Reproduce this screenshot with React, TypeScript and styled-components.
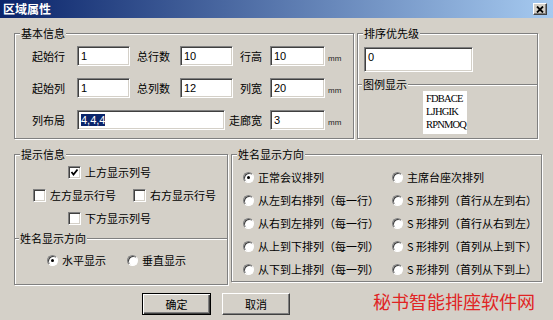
import styled, { createGlobalStyle } from 'styled-components'

const GlobalStyle = createGlobalStyle`
    html, body {
        margin: 0;
        padding: 0;
        background: #d4d0c8;
    }
    body {
        font-family: "Noto Sans CJK SC", "Liberation Sans", sans-serif;
        font-size: 11px;
        line-height: 13px;
        color: #000;
    }
`

const nameOrders = [
    ['正常会议排列', '主席台座次排列'],
    ['从左到右排列（每一行）', 'S 形排列（首行从左到右）'],
    ['从右到左排列（每一行）', 'S 形排列（首行从右到左）'],
    ['从上到下排列（每一列）', 'S 形排列（首列从上到下）'],
    ['从下到上排列（每一列）', 'S 形排列（首列从下到上）'],
]

const legendRows = ['FDBACE', 'LJHGIK', 'RPNMOQ']

const CheckBox = ({ checked, children }: { checked?: boolean; children: string }) => (
    <OptionLabel>
        <CheckSquare>
            {checked && (
                <svg width="9" height="9" viewBox="0 0 9 9">
                    <polyline points="1.5,4 3.5,6.5 7.5,1.5" fill="none" stroke="#000" strokeWidth="1.8" />
                </svg>
            )}
        </CheckSquare>
        {children}
    </OptionLabel>
)

const Radio = ({ checked, children }: { checked?: boolean; children: string }) => (
    <OptionLabel>
        <RadioDot $checked={checked} />
        {children}
    </OptionLabel>
)

export default function App() {
    return (
        <Window>
            <GlobalStyle />
            <TitleBar>
                <Title>区域属性</Title>
                <CloseButton>
                    <svg width="8" height="7" viewBox="0 0 8 7">
                        <path d="M1 0.5 L7 6.5 M7 0.5 L1 6.5" stroke="#000" strokeWidth="1.8" />
                    </svg>
                </CloseButton>
            </TitleBar>
            <Body>
                <Row>
                    <Group $w={340} $h={106}>
                        <Legend>基本信息</Legend>
                        <FieldGrid>
                            <FieldLabel>起始行</FieldLabel>
                            <Field $w={53}>1</Field>
                            <FieldLabel $pad={7}>总行数</FieldLabel>
                            <Field $w={53}>10</Field>
                            <FieldLabel $right>行高</FieldLabel>
                            <Field $w={55}>10</Field>
                            <Unit>mm</Unit>

                            <FieldLabel>起始列</FieldLabel>
                            <Field $w={53}>1</Field>
                            <FieldLabel $pad={7}>总列数</FieldLabel>
                            <Field $w={53}>12</Field>
                            <FieldLabel $right>列宽</FieldLabel>
                            <Field $w={55}>20</Field>
                            <Unit>mm</Unit>

                            <FieldLabel>列布局</FieldLabel>
                            <Field $w={148} $span={3}>
                                <Selected>4,4,4</Selected>
                            </Field>
                            <FieldLabel $right>走廊宽</FieldLabel>
                            <Field $w={55}>3</Field>
                            <Unit>mm</Unit>
                        </FieldGrid>
                    </Group>
                    <Group $w={181} $h={106} $gap={3}>
                        <Legend>排序优先级</Legend>
                        <PriorityField $w={109} $h={25}>0</PriorityField>
                        <Divider $top={6}>图例显示</Divider>
                        <LegendBox>
                            {legendRows.map((r) => (
                                <div key={r}>{r}</div>
                            ))}
                        </LegendBox>
                    </Group>
                </Row>
                <Row $top={15}>
                    <Group $w={214} $h={131}>
                        <Legend>提示信息</Legend>
                        <Checks>
                            <OptionRow $indent={53}>
                                <CheckBox checked>上方显示列号</CheckBox>
                            </OptionRow>
                            <OptionRow $indent={18} $gap={17}>
                                <CheckBox>左方显示行号</CheckBox>
                                <CheckBox>右方显示行号</CheckBox>
                            </OptionRow>
                            <OptionRow $indent={53}>
                                <CheckBox>下方显示列号</CheckBox>
                            </OptionRow>
                        </Checks>
                        <Divider $top={7}>姓名显示方向</Divider>
                        <OptionRow $indent={32} $gap={21} $top={9}>
                            <Radio checked>水平显示</Radio>
                            <Radio>垂直显示</Radio>
                        </OptionRow>
                    </Group>
                    <Group $w={311} $h={128} $gap={3}>
                        <Legend>姓名显示方向</Legend>
                        <OrderGrid>
                            {nameOrders.flat().map((t, i) => (
                                <Radio key={t} checked={i === 0}>
                                    {t}
                                </Radio>
                            ))}
                        </OrderGrid>
                    </Group>
                </Row>
                <ButtonRow>
                    <Button $default>确定</Button>
                    <Button>取消</Button>
                    <Watermark>秘书智能排座软件网</Watermark>
                </ButtonRow>
            </Body>
        </Window>
    )
}

const Window = styled.div`
    width: 553px;
    height: 320px;
    overflow: hidden;
    background: #d4d0c8;
    display: flex;
    flex-direction: column;
`

const TitleBar = styled.div`
    height: 18px;
    flex: none;
    display: flex;
    align-items: center;
    justify-content: space-between;
    padding: 0 6px 0 3px;
    background: linear-gradient(to right, #0a246a, #a6caf0);
`

const Title = styled.div`
    color: #fff;
    font-weight: bold;
    font-size: 12px;
    line-height: 18px;
`

const CloseButton = styled.div`
    width: 14px;
    height: 12px;
    box-sizing: border-box;
    display: flex;
    align-items: center;
    justify-content: center;
    background: #d4d0c8;
    border: 1px solid;
    border-color: #fff #404040 #404040 #fff;
    box-shadow: inset -1px -1px 0 #808080;
`

const Body = styled.div`
    padding: 15px 0 0 14px;
`

const Row = styled.div<{ $top?: number }>`
    display: flex;
    align-items: flex-start;
    margin-top: ${(p) => p.$top ?? 0}px;
`

const Group = styled.div<{ $w: number; $h: number; $gap?: number }>`
    position: relative;
    box-sizing: border-box;
    width: ${(p) => p.$w}px;
    height: ${(p) => p.$h}px;
    margin-left: ${(p) => p.$gap ?? 0}px;
    border: 1px solid #808080;
    box-shadow: inset 1px 1px 0 #fff, 1px 1px 0 #fff;
`

const Legend = styled.span`
    position: absolute;
    top: -7px;
    left: 5px;
    padding: 0 1px;
    line-height: 13px;
    background: #d4d0c8;
`

const FieldGrid = styled.div`
    display: grid;
    grid-template-columns: 45px 53px 50px 49px 41px 55px auto;
    grid-auto-rows: 20px;
    row-gap: 12px;
    align-items: center;
    padding: 12px 0 0 17px;
`

const FieldLabel = styled.div<{ $pad?: number; $right?: boolean }>`
    white-space: nowrap;
    padding-left: ${(p) => p.$pad ?? 0}px;
    padding-right: ${(p) => (p.$right ? 8 : 0)}px;
    text-align: ${(p) => (p.$right ? 'right' : 'left')};
`

const Field = styled.div<{ $w: number; $h?: number; $span?: number }>`
    box-sizing: border-box;
    width: ${(p) => p.$w}px;
    height: ${(p) => p.$h ?? 20}px;
    grid-column: span ${(p) => p.$span ?? 1};
    padding: 3px 0 0 3px;
    background: #fff;
    border: 1px solid;
    border-color: #808080 #fff #fff #808080;
    box-shadow: inset 1px 1px 0 #404040, inset -1px -1px 0 #d4d0c8;
    font-family: "Liberation Sans", sans-serif;
    font-size: 11px;
    line-height: 12px;
    white-space: nowrap;
`

const PriorityField = styled(Field)`
    margin: 13px 0 0 6px;
`

const Selected = styled.span`
    background: #0a246a;
    color: #fff;
`

const Unit = styled.div`
    padding: 5px 0 0 3px;
    font-family: "Liberation Sans", sans-serif;
    font-size: 8px;
    line-height: 10px;
    color: #222;
`

const Divider = styled.div<{ $top: number }>`
    display: flex;
    align-items: center;
    height: 13px;
    margin-top: ${(p) => p.$top}px;
    white-space: nowrap;
    &::before,
    &::after {
        content: '';
        height: 0;
        border-top: 1px solid #808080;
        border-bottom: 1px solid #fff;
    }
    &::before {
        width: 4px;
        margin-right: 1px;
    }
    &::after {
        flex: 1;
        margin-left: 1px;
    }
`

const LegendBox = styled.div`
    width: 44px;
    height: 43px;
    box-sizing: border-box;
    margin: 0 0 0 65px;
    padding: 1px 0 0 3px;
    background: #fff;
    font-family: "Liberation Serif", serif;
    font-size: 10.5px;
    letter-spacing: -0.8px;
    line-height: 13px;
    white-space: nowrap;
`

const Checks = styled.div`
    display: flex;
    flex-direction: column;
    gap: 10px;
    padding-top: 11px;
`

const OptionRow = styled.div<{ $indent: number; $gap?: number; $top?: number }>`
    display: flex;
    height: 13px;
    gap: ${(p) => p.$gap ?? 0}px;
    padding-left: ${(p) => p.$indent}px;
    margin-top: ${(p) => p.$top ?? 0}px;
`

const OptionLabel = styled.div`
    display: flex;
    align-items: center;
    gap: 4px;
    white-space: nowrap;
    line-height: 13px;
`

const CheckSquare = styled.div`
    width: 13px;
    height: 13px;
    box-sizing: border-box;
    display: flex;
    align-items: center;
    justify-content: center;
    background: #fff;
    border: 1px solid;
    border-color: #808080 #fff #fff #808080;
    box-shadow: inset 1px 1px 0 #404040, inset -1px -1px 0 #d4d0c8;
`

const RadioDot = styled.div<{ $checked?: boolean }>`
    position: relative;
    width: 11px;
    height: 11px;
    box-sizing: border-box;
    border-radius: 50%;
    background: #fff;
    border: 1px solid;
    border-color: #808080 #fff #fff #808080;
    box-shadow: inset 1px 1px 0 #404040;
    &::after {
        content: '';
        display: ${(p) => (p.$checked ? 'block' : 'none')};
        position: absolute;
        left: 3px;
        top: 3px;
        width: 3px;
        height: 3px;
        border-radius: 50%;
        background: #000;
    }
`

const OrderGrid = styled.div`
    display: grid;
    grid-template-columns: 149px auto;
    grid-auto-rows: 13px;
    row-gap: 10px;
    padding: 16px 0 0 11px;
`

const ButtonRow = styled.div`
    display: flex;
    align-items: flex-start;
    gap: 11px;
    margin-top: 8px;
    padding-left: 128px;
`

const Button = styled.div<{ $default?: boolean }>`
    width: ${(p) => (p.$default ? 69 : 68)}px;
    height: 22px;
    box-sizing: border-box;
    display: flex;
    align-items: center;
    justify-content: center;
    background: #d4d0c8;
    border: 1px solid;
    border-color: ${(p) => (p.$default ? '#000' : '#fff #404040 #404040 #fff')};
    box-shadow: ${(p) =>
        p.$default
            ? 'inset 1px 1px 0 #fff, inset -1px -1px 0 #404040, inset -2px -2px 0 #808080'
            : 'inset -1px -1px 0 #808080'};
`

const Watermark = styled.div`
    margin: -2px 0 0 72px;
    color: #e02424;
    font-size: 18px;
    line-height: 20px;
    white-space: nowrap;
`
